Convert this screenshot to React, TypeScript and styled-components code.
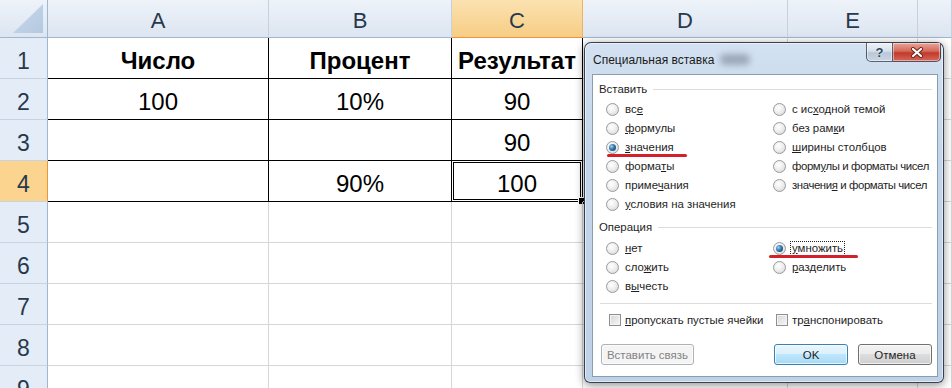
import styled, { createGlobalStyle } from "styled-components";

const GlobalStyle = createGlobalStyle`
  html, body {
    margin: 0;
    padding: 0;
    background: #ffffff;
  }
  body {
    font-family: "Liberation Sans", Arial, sans-serif;
  }
`;

const Page = styled.div`
  position: relative;
  width: 952px;
  height: 388px;
  overflow: hidden;
  background: #ffffff;
`;

const Sheet = styled.div`
  display: grid;
  grid-template-columns: 48px 221px 183px 131px 205px 130px 1fr;
  grid-template-rows: 38px repeat(9, 41px);
  width: 952px;
`;

const Corner = styled.div`
  display: flex;
  align-items: flex-end;
  justify-content: flex-end;
  padding: 0 3px 3px 0;
  background: linear-gradient(#eef3f9, #dce5f1);
  border-right: 1px solid #9eb6ce;
  border-bottom: 1px solid #9eb6ce;
`;

const ColHeader = styled.div<{ $selected?: boolean }>`
  display: flex;
  align-items: center;
  justify-content: center;
  padding-top: 5px;
  font-size: 22px;
  color: #27394d;
  background: ${(p) =>
    p.$selected
      ? "linear-gradient(#fbe2b0, #f7cd85)"
      : "linear-gradient(#eef3f9, #dce5f1)"};
  border-right: 1px solid ${(p) => (p.$selected ? "#f0b25e" : "#c5d1df")};
  border-bottom: 1px solid ${(p) => (p.$selected ? "#f29436" : "#9eb6ce")};
`;

const RowHeader = styled.div<{ $selected?: boolean }>`
  display: flex;
  align-items: center;
  justify-content: center;
  padding-top: 6px;
  font-size: 23px;
  color: #27394d;
  background: ${(p) => (p.$selected ? "#fbd58f" : "#e4ecf7")};
  border-right: 1px solid ${(p) => (p.$selected ? "#f29436" : "#9eb6ce")};
  border-bottom: 1px solid #c5d3e3;
`;

const Cell = styled.div<{ $framed?: boolean; $bold?: boolean; $active?: boolean }>`
  position: relative;
  display: flex;
  align-items: center;
  justify-content: center;
  padding-top: 5px;
  font-size: 24px;
  font-weight: ${(p) => (p.$bold ? 700 : 400)};
  color: #000000;
  white-space: nowrap;
  border-right: 1px solid ${(p) => (p.$framed ? "#000000" : "#d6d6d6")};
  border-bottom: 1px solid ${(p) => (p.$framed ? "#000000" : "#d6d6d6")};
  box-shadow: ${(p) =>
    p.$active ? "inset 0 0 0 1px #ffffff, inset 0 0 0 2px #000000" : "none"};

  &::after {
    content: "";
    display: ${(p) => (p.$active ? "block" : "none")};
    position: absolute;
    right: -4px;
    bottom: -4px;
    width: 6px;
    height: 6px;
    background: #000000;
    border: 1px solid #ffffff;
  }
`;

/* ---------- dialog ---------- */

const Window = styled.div`
  position: absolute;
  left: 584px;
  top: 42px;
  width: 360px;
  height: 341px;
  box-sizing: border-box;
  display: flex;
  flex-direction: column;
  padding: 0 5px 5px 7px;
  border: 1px solid rgba(28, 38, 52, 0.85);
  border-radius: 7px 7px 6px 6px;
  background: linear-gradient(180deg, #d3e1f1 0%, #c2d5ea 35%, #bed1e7 100%);
  box-shadow: 0 2px 10px rgba(0, 0, 0, 0.45),
    inset 0 0 0 1px rgba(255, 255, 255, 0.55);
`;

const TitleBar = styled.div`
  position: relative;
  display: flex;
  align-items: flex-start;
  height: 31px;
  margin-right: -3px;
`;

const Title = styled.div`
  padding: 10px 0 0 1px;
  font-size: 12px;
  line-height: 15px;
  color: #1b1b1b;
`;

/* blurred glimpse of the sheet behind the glass frame */
const Ghost = styled.span`
  position: absolute;
  left: 128px;
  top: 11px;
  width: 30px;
  height: 11px;
  border-radius: 5px;
  background: rgba(40, 52, 68, 0.32);
  filter: blur(3px);
`;

const TitleButtons = styled.div`
  display: flex;
  margin-left: auto;
`;

const TitleButton = styled.div<{ $close?: boolean }>`
  display: flex;
  align-items: center;
  justify-content: center;
  width: ${(p) => (p.$close ? "48px" : "27px")};
  height: 19px;
  box-sizing: border-box;
  border: 1px solid rgba(40, 52, 68, 0.75);
  border-top: none;
  border-left: ${(p) => (p.$close ? "none" : "1px solid rgba(40, 52, 68, 0.75)")};
  border-radius: ${(p) => (p.$close ? "0 0 5px 0" : "0 0 0 5px")};
  background: ${(p) =>
    p.$close
      ? "linear-gradient(180deg, #e8a597 0%, #d46a5a 45%, #c2392b 55%, #d4675a 100%)"
      : "linear-gradient(180deg, #eef2f7 0%, #d6e0eb 45%, #b9c7d8 55%, #cad6e4 100%)"};
  box-shadow: inset 0 0 0 1px rgba(255, 255, 255, 0.45);
  font-size: 13px;
  font-weight: 700;
  color: #34465a;
  text-shadow: 0 0 2px #ffffff;
`;

const Client = styled.div`
  flex: 1;
  display: flex;
  flex-direction: column;
  padding: 7px 5px 0 6px;
  border: 1px solid #8a9cb0;
  background: #ffffff;
  font-size: 11.4px;
  color: #1e1e1e;
`;

const GroupLabel = styled.div<{ $gap?: number }>`
  display: flex;
  align-items: center;
  gap: 6px;
  height: 15px;
  margin-top: ${(p) => p.$gap ?? 0}px;
  line-height: 15px;

  &::after {
    content: "";
    flex: 1;
    height: 1px;
    background: #dcdcdc;
  }
`;

const Options = styled.div<{ $rows: number; $gap?: number }>`
  display: grid;
  grid-template-columns: 167px 1fr;
  grid-auto-flow: column;
  grid-template-rows: ${(p) => `repeat(${p.$rows}, 19px)`};
  margin: ${(p) => p.$gap ?? 3}px 0 0 7px;
`;

const OptionRow = styled.div`
  position: relative;
  display: flex;
  align-items: center;
  gap: 6px;
  height: 19px;
`;

const Radio = styled.span<{ $checked?: boolean }>`
  position: relative;
  flex: none;
  width: 13px;
  height: 13px;
  box-sizing: border-box;
  border-radius: 50%;
  border: 1px solid #9a9a9a;
  background: radial-gradient(circle at 40% 35%, #ffffff 0%, #f1f1f1 40%, #d2d2d2 100%);

  &::after {
    content: "";
    display: ${(p) => (p.$checked ? "block" : "none")};
    position: absolute;
    left: 2px;
    top: 2px;
    width: 7px;
    height: 7px;
    border-radius: 50%;
    background: radial-gradient(circle at 35% 35%, #9fd0f2 0%, #2f78b0 45%, #0b3354 100%);
  }
`;

const OptionText = styled.span<{ $focused?: boolean; $tight?: boolean }>`
  line-height: 13px;
  padding: 0 1px;
  border: 1px dotted ${(p) => (p.$focused ? "#222222" : "transparent")};
  margin-left: -2px;
  letter-spacing: ${(p) => (p.$tight ? "-0.4px" : "0")};
  white-space: nowrap;
`;

const Mark = styled.span<{ $left: number; $width: number }>`
  position: absolute;
  top: 16px;
  left: ${(p) => p.$left}px;
  width: ${(p) => p.$width}px;
  height: 3px;
  border-radius: 2px;
  background: #d3202a;
`;

const Separator = styled.div`
  height: 1px;
  margin: 7px 0 0 1px;
  background: #dcdcdc;
`;

const Checks = styled.div`
  display: grid;
  grid-template-columns: 167px 1fr;
  height: 19px;
  margin: 6px 0 0 10px;
`;

const CheckRow = styled.div`
  display: flex;
  align-items: center;
  gap: 4px;
  white-space: nowrap;
`;

const CheckBox = styled.span`
  flex: none;
  width: 12px;
  height: 12px;
  box-sizing: border-box;
  border: 1px solid #8f8f8f;
  background: linear-gradient(135deg, #d6d6d6, #f7f7f7);
  box-shadow: inset 0 0 0 1px #f4f4f4;
`;

const Buttons = styled.div`
  display: flex;
  gap: 10px;
  margin: 15px 0 0 2px;
`;

const Button = styled.div<{ $variant?: "default" | "disabled" }>`
  display: flex;
  align-items: center;
  justify-content: center;
  width: ${(p) => (p.$variant === "disabled" ? "93px" : "74px")};
  height: 21px;
  box-sizing: border-box;
  border-radius: 3px;
  border: 1px solid
    ${(p) =>
      p.$variant === "disabled" ? "#adb2b5" : p.$variant === "default" ? "#3c7fb1" : "#707070"};
  background: ${(p) =>
    p.$variant === "disabled"
      ? "#f4f4f4"
      : p.$variant === "default"
      ? "linear-gradient(180deg, #eaf6fd 0%, #d9f0fc 50%, #bee6fd 50%, #a7d9f5 100%)"
      : "linear-gradient(180deg, #f2f2f2 0%, #ebebeb 50%, #dddddd 50%, #cfcfcf 100%)"};
  box-shadow: inset 0 0 0 1px rgba(255, 255, 255, 0.7);
  color: ${(p) => (p.$variant === "disabled" ? "#838383" : "#1e1e1e")};
  font-size: 11.5px;

  &:first-child {
    margin-right: auto;
  }
`;

type Label = [string, string, string];

type OptionProps = {
  label: Label;
  checked?: boolean;
  focused?: boolean;
  tight?: boolean;
  mark?: [number, number];
};

const Option = ({ label, checked, focused, tight, mark }: OptionProps) => (
  <OptionRow>
    <Radio $checked={checked} />
    <OptionText $focused={focused} $tight={tight}>
      {label[0]}
      <u>{label[1]}</u>
      {label[2]}
    </OptionText>
    {mark && <Mark $left={mark[0]} $width={mark[1]} />}
  </OptionRow>
);

const pasteLeft: OptionProps[] = [
  { label: ["вс", "е", ""] },
  { label: ["", "ф", "ормулы"] },
  { label: ["", "з", "начения"], checked: true, mark: [1, 80] },
  { label: ["форма", "т", "ы"] },
  { label: ["приме", "ч", "ания"] },
  { label: ["", "у", "словия на значения"] },
];

const pasteRight: OptionProps[] = [
  { label: ["с ис", "х", "одной темой"] },
  { label: ["без рам", "к", "и"] },
  { label: ["", "ш", "ирины столбцов"] },
  { label: ["форм", "у", "лы и форматы чисел"], tight: true },
  { label: ["значени", "я", " и форматы чисел"], tight: true },
];

const opLeft: OptionProps[] = [
  { label: ["", "н", "ет"] },
  { label: ["сло", "ж", "ить"] },
  { label: ["в", "ы", "честь"] },
];

const opRight: OptionProps[] = [
  { label: ["", "у", "множить"], checked: true, focused: true, mark: [-4, 89] },
  { label: ["", "р", "азделить"] },
];

const PasteSpecial = () => (
  <Window>
    <TitleBar>
      <Title>Специальная вставка</Title>
      <Ghost />
      <TitleButtons>
        <TitleButton>?</TitleButton>
        <TitleButton $close>
          <svg width="14" height="11" viewBox="0 0 14 11">
            <path d="M3 2 L11 9 M11 2 L3 9" stroke="#6b2018" strokeWidth="4" strokeLinecap="round" />
            <path d="M3 2 L11 9 M11 2 L3 9" stroke="#ffffff" strokeWidth="2.2" strokeLinecap="round" />
          </svg>
        </TitleButton>
      </TitleButtons>
    </TitleBar>
    <Client>
      <GroupLabel>Вставить</GroupLabel>
      <Options $rows={6}>
        {pasteLeft.map((o, i) => (
          <Option key={`pl${i}`} {...o} />
        ))}
        {pasteRight.map((o, i) => (
          <Option key={`pr${i}`} {...o} />
        ))}
      </Options>
      <GroupLabel $gap={6}>Операция</GroupLabel>
      <Options $rows={3} $gap={4}>
        {opLeft.map((o, i) => (
          <Option key={`ol${i}`} {...o} />
        ))}
        {opRight.map((o, i) => (
          <Option key={`or${i}`} {...o} />
        ))}
      </Options>
      <Separator />
      <Checks>
        <CheckRow>
          <CheckBox />
          <span>
            <u>п</u>ропускать пустые ячейки
          </span>
        </CheckRow>
        <CheckRow>
          <CheckBox />
          <span>
            тр<u>а</u>нспонировать
          </span>
        </CheckRow>
      </Checks>
      <Buttons>
        <Button $variant="disabled">Вставить связь</Button>
        <Button $variant="default">OK</Button>
        <Button>Отмена</Button>
      </Buttons>
    </Client>
  </Window>
);

/* ---------- sheet ---------- */

const columns = ["A", "B", "C", "D", "E", ""];

const data: string[][] = [
  ["Число", "Процент", "Результат"],
  ["100", "10%", "90"],
  ["", "", "90"],
  ["", "90%", "100"],
];

const App = () => {
  const rows = Array.from({ length: 9 }, (_, i) => i + 1);
  return (
    <Page>
      <GlobalStyle />
      <Sheet>
        <Corner>
          <svg width="32" height="30" viewBox="0 0 32 30">
            <defs>
              <linearGradient id="tri" x1="0" y1="0" x2="1" y2="1">
                <stop offset="0" stopColor="#cbd9ea" />
                <stop offset="1" stopColor="#b3c8e0" />
              </linearGradient>
            </defs>
            <polygon points="31,0 31,29 1,29" fill="url(#tri)" />
          </svg>
        </Corner>
        {columns.map((c, i) => (
          <ColHeader key={`h${i}`} $selected={c === "C"}>
            {c}
          </ColHeader>
        ))}
        {rows.flatMap((r) => [
          <RowHeader key={`r${r}`} $selected={r === 4}>
            {r}
          </RowHeader>,
          ...columns.map((_, c) => {
            const framed = r <= 4 && c < 3;
            const text = framed ? data[r - 1][c] : "";
            return (
              <Cell
                key={`c${r}-${c}`}
                $framed={framed}
                $bold={r === 1}
                $active={r === 4 && c === 2}
              >
                {text}
              </Cell>
            );
          }),
        ])}
      </Sheet>
      <PasteSpecial />
    </Page>
  );
};

export default App;
